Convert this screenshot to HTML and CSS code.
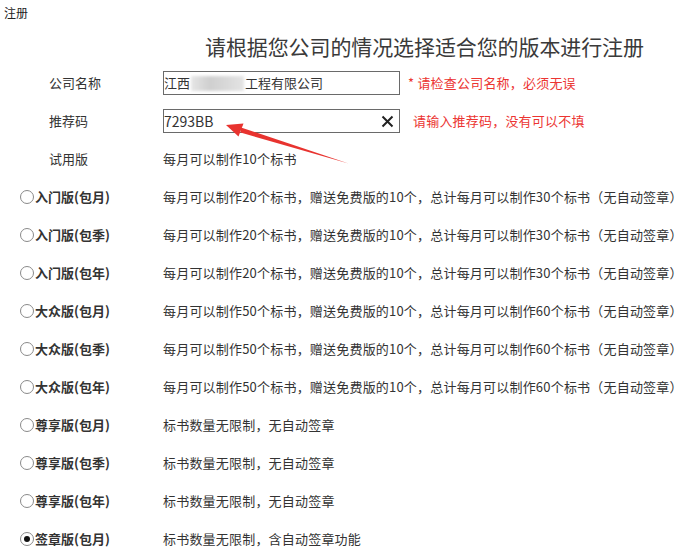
FILE: index.html
```html
<!DOCTYPE html>
<html lang="zh-CN">
<head>
<meta charset="utf-8">
<title>注册</title>
<link rel="stylesheet" href="styles.css">
</head>
<body>
<div class="page">
  <div class="top">注册</div>
  <h1 class="title">请根据您公司的情况选择适合您的版本进行注册</h1>
  <div class="form">
    <div class="label">公司名称</div>
    <div class="value">
      <div class="field"><span>江西</span><span class="blur"></span><span>工程有限公司</span></div>
      <span class="hint">* 请检查公司名称，必须无误</span>
    </div>

    <div class="label">推荐码</div>
    <div class="value">
      <div class="field"><span class="code">7293BB</span>
        <svg class="clear" width="13" height="13" viewBox="0 0 13 13"><path d="M1.5 1.5 L11.5 11.5 M11.5 1.5 L1.5 11.5" stroke="#222" stroke-width="2" fill="none"/></svg>
      </div>
      <span class="hint hint2">请输入推荐码，没有可以不填</span>
    </div>

    <div class="label">试用版</div>
    <div class="value">每月可以制作10个标书</div>

    <label class="opt"><span class="radio"></span>入门版(包月)</label>
    <div class="value">每月可以制作20个标书，赠送免费版的10个，总计每月可以制作30个标书（无自动签章）</div>
    <label class="opt"><span class="radio"></span>入门版(包季)</label>
    <div class="value">每月可以制作20个标书，赠送免费版的10个，总计每月可以制作30个标书（无自动签章）</div>
    <label class="opt"><span class="radio"></span>入门版(包年)</label>
    <div class="value">每月可以制作20个标书，赠送免费版的10个，总计每月可以制作30个标书（无自动签章）</div>

    <label class="opt"><span class="radio"></span>大众版(包月)</label>
    <div class="value">每月可以制作50个标书，赠送免费版的10个，总计每月可以制作60个标书（无自动签章）</div>
    <label class="opt"><span class="radio"></span>大众版(包季)</label>
    <div class="value">每月可以制作50个标书，赠送免费版的10个，总计每月可以制作60个标书（无自动签章）</div>
    <label class="opt"><span class="radio"></span>大众版(包年)</label>
    <div class="value">每月可以制作50个标书，赠送免费版的10个，总计每月可以制作60个标书（无自动签章）</div>

    <label class="opt"><span class="radio"></span>尊享版(包月)</label>
    <div class="value">标书数量无限制，无自动签章</div>
    <label class="opt"><span class="radio"></span>尊享版(包季)</label>
    <div class="value">标书数量无限制，无自动签章</div>
    <label class="opt"><span class="radio"></span>尊享版(包年)</label>
    <div class="value">标书数量无限制，无自动签章</div>

    <label class="opt"><span class="radio checked"></span>签章版(包月)</label>
    <div class="value">标书数量无限制，含自动签章功能</div>
  </div>

  <svg class="arrow" width="692" height="554" viewBox="0 0 692 554">
    <polygon points="241,127.5 348.5,163.5 240.5,132.5" fill="#e8332f"/>
    <polygon points="226,125 243.5,123.5 238.5,136.5" fill="#e8332f"/>
  </svg>
</div>
</body>
</html>
```

FILE: styles.css
```css
html, body {
  margin: 0;
  padding: 0;
  background: #ffffff;
}

body {
  font-family: "Noto Sans CJK SC", "Microsoft YaHei", sans-serif;
  font-size: 13px;
  color: #333333;
}

.page {
  position: relative;
  width: 692px;
  height: 554px;
  overflow: hidden;
}

.top {
  height: 26px;
  line-height: 26px;
  padding-left: 4px;
  font-size: 12px;
  color: #222;
}

.title {
  margin: 3px 0 0 0;
  padding-left: 205px;
  height: 35px;
  line-height: 35px;
  font-size: 21px;
  font-weight: normal;
  color: #3a3a3a;
  letter-spacing: -0.1px;
  white-space: nowrap;
}

.form {
  display: grid;
  grid-template-columns: 163px 1fr;
  grid-auto-rows: 38px;
  align-items: center;
}

.label {
  padding-left: 49px;
  line-height: 18px;
}

.value {
  display: flex;
  align-items: center;
  line-height: 18px;
  white-space: nowrap;
  letter-spacing: 0.2px;
}

.field {
  box-sizing: border-box;
  width: 237px;
  height: 24px;
  border: 1px solid #6a6a6a;
  display: flex;
  align-items: center;
  padding: 0 4px 0 0;
  font-size: 13px;
  letter-spacing: 0;
  color: #333;
}

.code {
  font-size: 14px;
}

.blur {
  display: inline-block;
  width: 53px;
  height: 15px;
  margin: 0 1px 0 1px;
  background: linear-gradient(90deg, #e6e6e6, #cfcfcf 35%, #d8d8d8 65%, #e4e4e4);
  filter: blur(1.5px);
}

.clear {
  margin-left: auto;
  margin-right: 1px;
}

.hint {
  margin-left: 8px;
  color: #ec3532;
  font-size: 13px;
}

.hint2 {
  margin-left: 13px;
}

.opt {
  display: flex;
  align-items: center;
  padding-left: 20px;
  font-weight: bold;
  line-height: 18px;
  color: #333;
}

.radio {
  box-sizing: border-box;
  width: 14px;
  height: 14px;
  border: 1px solid #8a8a8a;
  border-radius: 50%;
  margin-right: 1px;
  position: relative;
  background: #fff;
}

.radio.checked::after {
  content: "";
  position: absolute;
  left: 3px;
  top: 3px;
  width: 6px;
  height: 6px;
  border-radius: 50%;
  background: #111;
}

.arrow {
  position: absolute;
  left: 0;
  top: 0;
  pointer-events: none;
}
```
